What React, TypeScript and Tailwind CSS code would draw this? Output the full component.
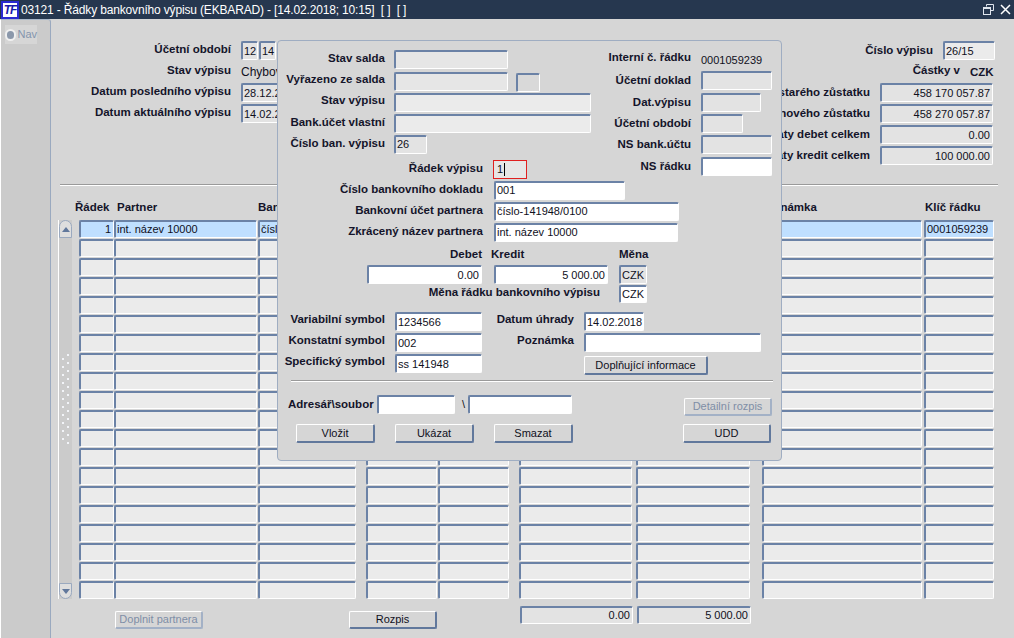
import type { ReactNode } from "react";

const font = { fontFamily: '"Liberation Sans", Arial, sans-serif' };

const Field = ({ className = "", children }: { className?: string; children?: ReactNode }) => (
  <div
    className={`box-border flex shrink-0 items-center overflow-hidden rounded-[2px] border-t-2 border-l-2 border-r border-b border-t-[#6b82a6] border-l-[#6b82a6] border-r-white border-b-white pl-[1px] pr-[2px] text-[11px] leading-none whitespace-nowrap text-[#10101c] ${className}`}
  >
    {children}
  </div>
);

const Lbl = ({ className = "", children }: { className?: string; children: ReactNode }) => (
  <div className={`shrink-0 whitespace-nowrap text-[11.5px] leading-none font-bold text-[#14142a] ${className}`}>{children}</div>
);

const Btn = ({ className = "", off = false, children }: { className?: string; off?: boolean; children: ReactNode }) => (
  <div
    className={`box-border flex shrink-0 items-center justify-center rounded-[2px] border-t border-l border-t-white border-l-white border-r-2 border-b-2 text-[11px] leading-none whitespace-nowrap ${
      off ? "border-r-[#a3b1c6] border-b-[#a3b1c6] text-[#7f8ea6]" : "border-r-[#61789c] border-b-[#61789c] text-[#10101c]"
    } ${className}`}
  >
    {children}
  </div>
);

const cells = [
  "w-[35px] ml-[79px]",
  "w-[143px]",
  "w-[98px] ml-[1px]",
  "w-[71px] ml-[10px]",
  "w-[71px] ml-[1px]",
  "w-[113px] ml-[10px]",
  "w-[114px] ml-[4px]",
  "w-[160px] ml-[12px]",
  "w-[70px] ml-[2px]",
];

const firstRow = ["1", "int. název 10000", "číslo-141948/0100", "", "", "", "", "", "0001059239"];

const Dots = () => (
  <div className="absolute top-[354px] left-[62px] flex w-[7px] flex-col gap-[6px]">
    {Array.from({ length: 12 }).map((_, i) => (
      <div key={i} className="relative h-[2px]">
        <span className="absolute top-0 right-0 h-[2px] w-[2px] bg-[#f2f4f8]" />
        {i < 11 && <span className="absolute top-[4px] left-0 h-[2px] w-[2px] bg-[#f2f4f8]" />}
      </div>
    ))}
  </div>
);

const Dialog = () => (
  <div className="absolute top-[40px] left-[277px] box-border h-[421px] w-[505px] rounded-[4px] border border-[#9fadc2] bg-[#d6d6d6] pt-[9px]">
    <div className="flex">
      <div className="flex flex-col gap-[3px]">
        <div className="flex h-[18px] items-center">
          <Lbl className="mb-[1px] w-[107px] text-right">Stav salda</Lbl>
          <Field className="ml-[9px] h-[19px] w-[114px] bg-[#e6e6e6]" />
        </div>
        <div className="mt-[1px] flex h-[18px] items-center">
          <Lbl className="mb-[2px] w-[107px] text-right">Vyřazeno ze salda</Lbl>
          <Field className="ml-[9px] h-[19px] w-[114px] bg-[#e6e6e6]" />
          <Field className="mt-[2px] ml-[8px] h-[19px] w-[24px] bg-[#d9d9d9]" />
        </div>
        <div className="flex h-[18px] items-center">
          <Lbl className="mb-[2px] w-[107px] text-right">Stav výpisu</Lbl>
          <Field className="ml-[9px] h-[19px] w-[197px] bg-[#ebebeb]" />
        </div>
        <div className="flex h-[18px] items-center">
          <Lbl className="mb-[1px] w-[107px] text-right">Bank.účet vlastní</Lbl>
          <Field className="ml-[9px] h-[19px] w-[197px] bg-[#ebebeb]" />
        </div>
        <div className="flex h-[18px] items-center">
          <Lbl className="w-[107px] text-right">Číslo ban. výpisu</Lbl>
          <Field className="ml-[9px] h-[19px] w-[33px] bg-[#e3e3e3]">26</Field>
        </div>
        <div className="mt-[4px] flex h-[19px] items-center">
          <Lbl className="mb-[1px] w-[205px] text-right">Řádek výpisu</Lbl>
          <div className="ml-[10px] box-border flex h-[19px] w-[34px] items-center border border-[#e02020] bg-[#e6e6e6] pl-[3px] text-[11px] leading-none text-[#10101c]">
            1<span className="ml-[1px] h-[13px] w-[1px] bg-black" />
          </div>
        </div>
      </div>
      <div className="flex flex-col gap-[3px]">
        <div className="flex h-[18px] items-center">
          <Lbl className="mb-[2px] w-[100px] text-right">Interní č. řádku</Lbl>
          <span className="mt-[2px] ml-[10px] text-[11px] leading-none text-[#10101c]">0001059239</span>
        </div>
        <div className="flex h-[18px] items-center">
          <Lbl className="mt-[1px] w-[100px] text-right">Účetní doklad</Lbl>
          <Field className="ml-[10px] h-[19px] w-[71px] bg-[#e3e3e3]" />
        </div>
        <div className="mt-[1px] flex h-[18px] items-center">
          <Lbl className="mt-[1px] w-[100px] text-right">Dat.výpisu</Lbl>
          <Field className="ml-[10px] h-[19px] w-[60px] bg-[#e3e3e3]" />
        </div>
        <div className="flex h-[18px] items-center">
          <Lbl className="mt-[1px] w-[100px] text-right">Účetní období</Lbl>
          <Field className="ml-[10px] h-[19px] w-[42px] bg-[#e3e3e3]" />
        </div>
        <div className="flex h-[18px] items-center">
          <Lbl className="mt-[2px] w-[100px] text-right">NS bank.účtu</Lbl>
          <Field className="ml-[10px] h-[19px] w-[71px] bg-[#e3e3e3]" />
        </div>
        <div className="mt-[1px] flex h-[18px] items-center">
          <Lbl className="mt-[1px] w-[100px] text-right">NS řádku</Lbl>
          <Field className="ml-[10px] h-[19px] w-[71px] bg-white" />
        </div>
      </div>
    </div>

    <div className="mt-[2px] flex flex-col gap-[3px]">
      <div className="flex h-[18px] items-center">
        <Lbl className="mb-[1px] w-[205px] text-right">Číslo bankovního dokladu</Lbl>
        <Field className="ml-[11px] h-[19px] w-[131px] bg-white">001</Field>
      </div>
      <div className="flex h-[18px] items-center">
        <Lbl className="mb-[1px] w-[205px] text-right">Bankovní účet partnera</Lbl>
        <Field className="ml-[11px] h-[19px] w-[185px] bg-white">číslo-141948/0100</Field>
      </div>
      <div className="flex h-[18px] items-center">
        <Lbl className="mb-[1px] w-[205px] text-right">Zkrácený název partnera</Lbl>
        <Field className="ml-[11px] h-[19px] w-[184px] bg-white">int. název 10000</Field>
      </div>
    </div>

    <div className="mt-[7px] flex h-[14px] items-center">
      <Lbl className="w-[204px] text-right">Debet</Lbl>
      <Lbl className="ml-[9px] w-[128px]">Kredit</Lbl>
      <Lbl>Měna</Lbl>
    </div>
    <div className="mt-[3px] flex h-[19px]">
      <Field className="ml-[89px] w-[115px] justify-end bg-white">0.00</Field>
      <Field className="ml-[12px] w-[114px] justify-end bg-white">5 000.00</Field>
      <Field className="ml-[11px] w-[28px] bg-[#e3e3e3]">CZK</Field>
    </div>
    <div className="mt-[1px] flex h-[18px] items-center">
      <Lbl className="mb-[3px] w-[322px] text-right">Měna řádku bankovního výpisu</Lbl>
      <Field className="ml-[19px] h-[18px] w-[28px] bg-white">CZK</Field>
    </div>

    <div className="mt-[9px] flex">
      <div className="flex flex-col gap-[2px]">
        <div className="flex h-[19px] items-center">
          <Lbl className="mb-[3px] w-[107px] text-right">Variabilní symbol</Lbl>
          <Field className="ml-[10px] h-[19px] w-[87px] bg-white">1234566</Field>
        </div>
        <div className="flex h-[19px] items-center">
          <Lbl className="mb-[3px] w-[107px] text-right">Konstatní symbol</Lbl>
          <Field className="ml-[10px] h-[19px] w-[87px] bg-white">002</Field>
        </div>
        <div className="flex h-[19px] items-center">
          <Lbl className="mb-[3px] w-[107px] text-right">Specifický symbol</Lbl>
          <Field className="ml-[10px] h-[19px] w-[87px] bg-white">ss 141948</Field>
        </div>
      </div>
      <div className="flex flex-col gap-[2px]">
        <div className="flex h-[19px] items-center">
          <Lbl className="mb-[3px] w-[92px] text-right">Datum úhrady</Lbl>
          <Field className="ml-[10px] h-[19px] w-[60px] bg-white">14.02.2018</Field>
        </div>
        <div className="flex h-[19px] items-center">
          <Lbl className="mb-[3px] w-[92px] text-right">Poznámka</Lbl>
          <Field className="ml-[10px] h-[19px] w-[177px] bg-white" />
        </div>
        <Btn className="mt-[2px] ml-[102px] h-[19px] w-[124px]">Doplňující informace</Btn>
      </div>
    </div>

    <div className="mt-[5px] ml-[13px] h-[2px] w-[482px] border-t border-b border-t-[#9a9a9a] border-b-white" />

    <div className="mt-[13px] flex h-[19px] items-center">
      <Lbl className="ml-[10px] w-[89px]">Adresář\soubor</Lbl>
      <Field className="h-[19px] w-[78px] bg-white" />
      <span className="ml-[7px] w-[6px] text-[11px] leading-none text-[#10101c]">\</span>
      <Field className="h-[19px] w-[104px] bg-white" />
      <Btn off className="mt-[4px] ml-[112px] h-[18px] w-[88px]">Detailní rozpis</Btn>
    </div>

    <div className="mt-[10px] flex h-[19px]">
      <Btn className="ml-[18px] w-[79px]">Vložit</Btn>
      <Btn className="ml-[20px] w-[79px]">Ukázat</Btn>
      <Btn className="ml-[20px] w-[79px]">Smazat</Btn>
      <Btn className="ml-[110px] w-[88px]">UDD</Btn>
    </div>
  </div>
);

export default function App() {
  return (
    <div className="relative flex h-[638px] w-[1014px] flex-col overflow-hidden bg-[#d6d6d6]" style={font}>
      {/* title bar */}
      <div className="flex h-[19px] shrink-0 items-center bg-[#26374f] text-white">
        <div className="ml-[1px] flex h-[18px] w-[18px] items-center justify-center border-2 border-[#2a2ad0] bg-white text-[12px] leading-none font-bold tracking-[-1px] italic text-[#1818a8]">
          TF
        </div>
        <span className="ml-[2px] text-[12px] leading-none tracking-[-0.16px] whitespace-pre">
          03121 - Řádky bankovního výpisu (EKBARAD) - [14.02.2018; 10:15]{"  [ ]  [ ]"}
        </span>
        <div className="ml-auto flex items-center gap-[6px] pr-[3px]">
          <svg width="11" height="11" viewBox="0 0 11 11" fill="none" stroke="#dfe5ee" strokeWidth="1">
            <path d="M3.5 2.5V.5h7v6h-2.5" />
            <rect x=".5" y="3.5" width="7" height="7" />
            <path d="M.5 4.5h7" />
          </svg>
          <svg width="11" height="11" viewBox="0 0 11 11" fill="none" stroke="#ffffff" strokeWidth="1.5">
            <path d="M1 1l9 9M10 1l-9 9" />
          </svg>
        </div>
      </div>

      <div className="flex min-h-0 flex-1">
        {/* nav side */}
        <div className="box-border w-[51px] shrink-0 rounded-tr-[3px] border-t border-r border-l border-t-[#a9b6c9] border-r-[#9aa9bf] border-l-white bg-[#cbcbcb] pt-[5px] pl-[4px]">
          <div className="flex h-[19px] w-[32px] items-center gap-[1px] bg-[#d6d6d6] text-[11px] leading-none text-[#8495ad]">
            <span className="box-border h-[12px] w-[12px] rounded-full border-2 border-[#f0f0f0] bg-[#8b98ab]" />
            Nav
          </div>
        </div>

        {/* form */}
        <div className="min-w-0 flex-1">
          {/* header fields */}
          <div className="flex h-[165px] pt-[22px]">
            <div className="flex w-[600px] flex-col gap-[2px]">
              <div className="flex h-[19px] items-center">
                <Lbl className="mb-[2px] w-[180px] text-right">Účetní období</Lbl>
                <Field className="ml-[10px] h-[19px] w-[17px] bg-[#e3e3e3]">12</Field>
                <Field className="ml-[1px] h-[19px] w-[17px] bg-[#e3e3e3]">14</Field>
              </div>
              <div className="flex h-[19px] items-center">
                <Lbl className="mb-[1px] w-[180px] text-right">Stav výpisu</Lbl>
                <span className="mt-[1px] ml-[10px] text-[12px] leading-none text-[#10101c]">Chybový</span>
              </div>
              <div className="flex h-[19px] items-center">
                <Lbl className="mb-[1px] w-[180px] text-right">Datum posledního výpisu</Lbl>
                <Field className="ml-[10px] h-[19px] w-[60px] bg-[#e3e3e3]">28.12.2017</Field>
              </div>
              <div className="flex h-[19px] items-center">
                <Lbl className="mb-[1px] w-[180px] text-right">Datum aktuálního výpisu</Lbl>
                <Field className="ml-[10px] h-[19px] w-[60px] bg-[#e3e3e3]">14.02.2018</Field>
              </div>
            </div>
            <div className="flex flex-1 flex-col">
              <div className="flex h-[19px] items-center justify-end pr-[19px]">
                <Lbl>Číslo výpisu</Lbl>
                <Field className="ml-[10px] h-[19px] w-[52px] bg-[#ebebeb]">26/15</Field>
              </div>
              <div className="mt-[2px] flex h-[19px] items-center justify-end pr-[21px]">
                <Lbl className="mb-[2px]">Částky v</Lbl>
                <Lbl className="mt-[2px] ml-[10px] w-[23px]">CZK</Lbl>
              </div>
              <div className="mt-[2px] flex flex-col gap-[2px]">
                {[
                  ["Počátečního starého zůstatku", "458 170 057.87"],
                  ["Počátečního nového zůstatku", "458 270 057.87"],
                  ["Obraty debet celkem", "0.00"],
                  ["Obraty kredit celkem", "100 000.00"],
                ].map(([label, value]) => (
                  <div key={label} className="flex h-[19px] items-center justify-end pr-[21px]">
                    <Lbl>{label}</Lbl>
                    <Field className="ml-[10px] h-[19px] w-[113px] justify-end bg-[#e3e3e3]">{value}</Field>
                  </div>
                ))}
              </div>
            </div>
          </div>

          <div className="ml-[9px] h-[2px] w-[938px] border-t border-b border-t-[#9a9a9a] border-b-white" />
        </div>
      </div>

      {/* table, lies across the nav side border so the columns keep page coordinates */}
      <div className="absolute top-[201px] left-0 w-full">
        <div className="flex h-[14px] items-center">
          <Lbl className="ml-[75px] w-[42px]">Řádek</Lbl>
          <Lbl className="w-[141px]">Partner</Lbl>
          <Lbl className="w-[502px]">Bankovní účet</Lbl>
          <Lbl className="w-[165px]">Poznámka</Lbl>
          <Lbl>Klíč řádku</Lbl>
        </div>
        <div className="relative mt-[5px] flex flex-col gap-[1px]">
          {Array.from({ length: 20 }).map((_, r) => (
            <div key={r} className="flex h-[18px]">
              {cells.map((c, i) => (
                <Field
                  key={i}
                  className={`${c} h-[18px] ${r === 0 ? "bg-[#bfdfff]" : "bg-[#ebebeb]"} ${r === 0 && i === 0 ? "justify-end" : ""}`}
                >
                  {r === 0 ? firstRow[i] : ""}
                </Field>
              ))}
            </div>
          ))}
          {/* scrollbar */}
          <div className="absolute top-0 left-[58px] flex h-[379px] w-[14px] flex-col border-l border-l-white bg-[#cbcbcb]">
            <div className="flex h-[18px] items-center justify-center rounded-t-[7px] border border-[#9aa9bf] bg-[#dedede]">
              <span className="h-0 w-0 border-r-[4px] border-b-[5px] border-l-[4px] border-r-transparent border-b-[#61789c] border-l-transparent" />
            </div>
            <div className="flex-1" />
            <div className="flex h-[16px] items-center justify-center rounded-b-[7px] border border-[#9aa9bf] bg-[#dedede]">
              <span className="h-0 w-0 border-t-[5px] border-r-[4px] border-l-[4px] border-t-[#61789c] border-r-transparent border-l-transparent" />
            </div>
          </div>
        </div>
        <div className="mt-[7px] flex h-[24px]">
          <Btn off className="mt-[5px] ml-[115px] h-[18px] w-[88px]">Doplnit partnera</Btn>
          <Btn className="mt-[5px] ml-[146px] h-[18px] w-[88px]">Rozpis</Btn>
          <Field className="ml-[83px] h-[18px] w-[113px] justify-end bg-[#e3e3e3]">0.00</Field>
          <Field className="ml-[4px] h-[18px] w-[114px] justify-end bg-[#e3e3e3]">5 000.00</Field>
        </div>
      </div>

      <Dots />
      <Dialog />
    </div>
  );
}
